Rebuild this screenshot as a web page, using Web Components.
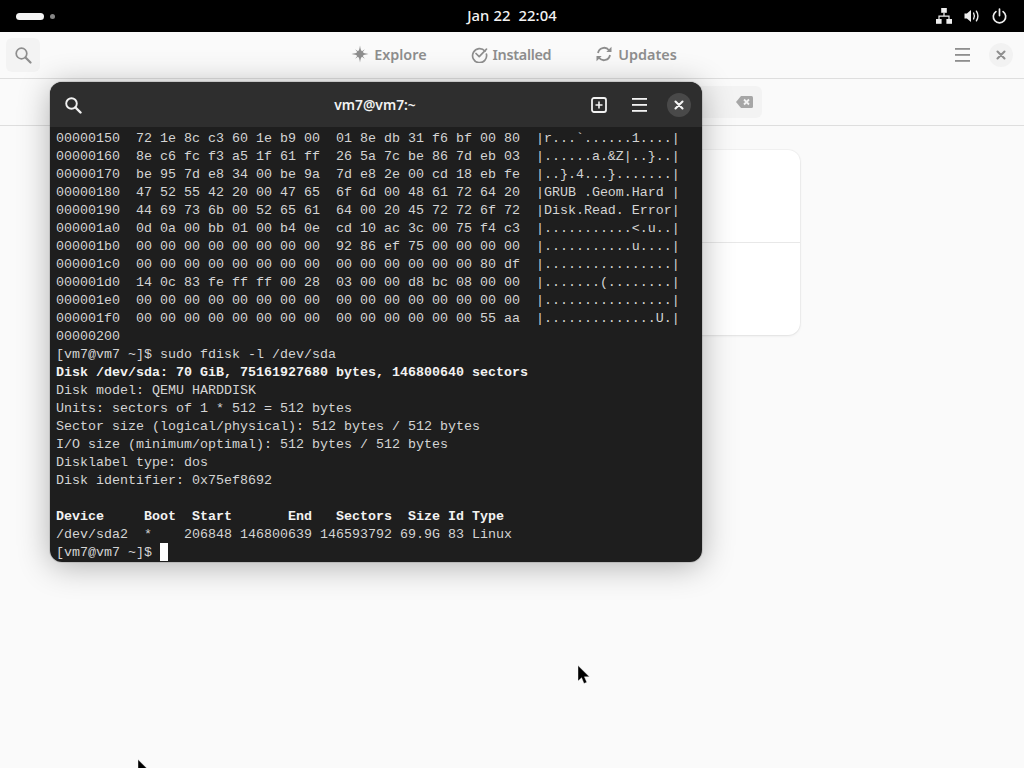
<!DOCTYPE html>
<html lang="en">
<head>
<meta charset="utf-8">
<title>Desktop</title>
<style>
html,body{margin:0;padding:0;width:1024px;height:768px;overflow:hidden;background:#fafafa}
</style>
</head>
<body>
<gnome-desktop>
  <top-bar slot="bar"></top-bar>
  <software-app></software-app>
  <terminal-window title-text="vm7@vm7:~"></terminal-window>
  <mouse-pointer style="left:577px;top:665px"></mouse-pointer>
  <mouse-pointer style="left:137px;top:759px"></mouse-pointer>
</gnome-desktop>
<script>
function def(name, html, setup){
  customElements.define(name, class extends HTMLElement{
    constructor(){super();const r=this.attachShadow({mode:'open'});r.innerHTML=html;if(setup)setup(r,this);}
  });
}
const ICON={
 search:(c,w=1.7)=>`<svg width="18" height="18" viewBox="0 0 18 18" fill="none" stroke="${c}" stroke-width="${w}" stroke-linecap="round"><circle cx="7.5" cy="7.5" r="5.3"/><path d="M11.5 11.5l5 5" stroke-width="${w+.5}"/></svg>`,
 menu:(c)=>`<svg width="15" height="14" viewBox="0 0 15 14" fill="${c}"><rect x="0" y="0" width="15" height="1.8"/><rect x="0" y="6" width="15" height="1.8"/><rect x="0" y="12" width="15" height="1.8"/></svg>`,
 close:(c)=>`<svg width="10" height="10" viewBox="0 0 10 10" fill="none" stroke="${c}" stroke-width="2.1" stroke-linecap="round"><path d="M1.5 1.5l7 7M8.5 1.5l-7 7"/></svg>`
};
def('gnome-desktop',`<style>
:host{display:block;position:relative;width:1024px;height:768px;overflow:hidden;background:#fafafa}
.col{display:flex;flex-direction:column;height:100%}
</style><div class="col"><slot name="bar"></slot><slot></slot></div>`);

def('top-bar',`<style>
:host{display:grid;grid-template-columns:1fr auto 1fr;align-items:center;height:32px;background:#000;color:#f2f2f2;font:500 14.8px "Noto Sans",sans-serif;flex:none}
.act{display:flex;align-items:center;gap:6px;padding-left:16px}
.pill{width:28px;height:7px;border-radius:4px;background:#f4f4f4}
.dot{width:5px;height:5px;border-radius:50%;background:#858585}
.clock{white-space:pre;letter-spacing:.1px;position:relative;top:-1px}
.tray{display:flex;justify-content:flex-end;align-items:center;gap:12px;padding-right:17px}
svg{display:block}
</style>
<div class="act"><span class="pill"></span><span class="dot"></span></div>
<div class="clock">Jan 22  22:04</div>
<div class="tray">
<svg width="16" height="16" viewBox="0 0 16 16" fill="#eee"><rect x="5.2" y="0" width="5.6" height="4.8"/><rect x="0" y="11" width="5.6" height="4.8"/><rect x="10.4" y="11" width="5.6" height="4.8"/><path d="M7.4 4.8h1.2v2.7h5v3.5h-1.2V8.7H3.6V11H2.4V7.5h5z"/></svg>
<svg width="16" height="16" viewBox="0 0 16 16" fill="none" stroke="#eee"><path d="M0.5 5.5h2.4L7 2v12L2.9 10.5H.5z" fill="#eee" stroke="none"/><path d="M9.6 5c1 1.9 1 4.1 0 6" stroke-width="1.4" stroke-linecap="round"/><path d="M12.4 3.2c1.9 3 1.9 6.6 0 9.6" stroke-width="1.4" stroke-linecap="round"/></svg>
<svg width="15" height="16" viewBox="0 0 15 16" fill="none" stroke="#eee" stroke-width="1.7" stroke-linecap="round"><path d="M7.5 1v6.6"/><path d="M3.9 3.6A6.2 6.2 0 1 0 11.1 3.6"/></svg>
</div>`);

def('nav-tab',`<style>
:host{display:flex;align-items:center;gap:5px;color:#8e8e8e;font:600 14.4px "Noto Sans",sans-serif;position:relative;top:-1px}
::slotted(svg){display:block}
</style><slot name="icon"></slot><slot></slot>`);

def('tool-button',`<style>
:host{display:flex;align-items:center;justify-content:center;width:34px;height:34px;border-radius:var(--r,6px);background:var(--bg,transparent);flex:none}
</style><slot></slot>`);

def('result-card',`<style>
:host{display:block;width:576px;height:185px;background:#fff;border-radius:12px;box-shadow:0 0 0 1px rgba(0,0,0,.03),0 1px 3px rgba(0,0,0,.08);box-sizing:border-box;padding-top:92px}
div{height:1px;background:#e8e8e8}
</style><div></div>`);

def('software-app',`<style>
:host{display:flex;flex-direction:column;flex:1;background:#fafafa;min-height:0}
header{display:grid;grid-template-columns:1fr auto 1fr;align-items:center;height:46px;border-bottom:1px solid #dedede;padding:0 6px;flex:none}
.tabs{display:flex;gap:44px;padding-left:4px}
.tabs nav-tab:nth-child(2){letter-spacing:-.3px;margin-left:0}
.end{display:flex;justify-content:flex-end;gap:5px}
.sbar{height:46px;border-bottom:1px solid #dedede;display:flex;justify-content:center;align-items:center;flex:none}
.entry{width:500px;height:32px;border-radius:6px;background:#f3f3f3;display:flex;align-items:center;justify-content:flex-end;padding-right:9px;box-sizing:border-box}
main{flex:1;display:flex;flex-direction:column;align-items:center;padding-top:24px}
svg{display:block}
.left{display:flex}
.b1{--bg:#f3f3f3}
.circle{width:24px;height:24px;border-radius:50%;background:#f2f2f2;display:flex;align-items:center;justify-content:center}
</style>
<header>
<div class="left"><tool-button class="b1">${ICON.search('#8e8e8e')}</tool-button></div>
<div class="tabs">
<nav-tab><svg slot="icon" width="18" height="18" viewBox="0 0 18 18" fill="#8e8e8e"><path d="M9 0.500C9.500 4 10 5.500 11 6.200L13.800 4.200 11.800 7C12.500 8 14 8.500 17.500 9 14 9.500 12.500 10 11.800 11L13.800 13.800 11 11.800C10 12.500 9.500 14 9 17.500 8.500 14 8 12.500 7 11.800L4.200 13.800 6.200 11C5.500 10 4 9.500 .5 9 4 8.500 5.500 8 6.200 7L4.200 4.200 7 6.200C8 5.500 8.500 4 9 .5z"/></svg>Explore</nav-tab>
<nav-tab><svg slot="icon" width="17" height="17" viewBox="0 0 17 17" fill="none" stroke="#8e8e8e" stroke-width="1.7" stroke-linecap="round" stroke-linejoin="round"><path d="M14 5.200A7 7 0 1 0 15.400 8"/><path d="M5 7.500l3.200 3.200L15.500 3.200"/></svg>Installed</nav-tab>
<nav-tab><svg slot="icon" width="18" height="18" viewBox="0 0 18 18" fill="none" stroke="#8e8e8e" stroke-width="1.8"><path d="M3 8A6.200 6.200 0 0 1 14 5.200"/><path d="M15 10A6.200 6.200 0 0 1 4 12.800"/><path d="M16.500 1.800V7h-5.200z" fill="#8e8e8e" stroke="none"/><path d="M1.500 16.200V11h5.200z" fill="#8e8e8e" stroke="none"/></svg>Updates</nav-tab>
</div>
<div class="end">
<tool-button>${ICON.menu('#8e8e8e')}</tool-button>
<tool-button><span class="circle">${ICON.close('#8e8e8e')}</span></tool-button>
</div>
</header>
<div class="sbar"><div class="entry"><svg width="17" height="12" viewBox="0 0 17 12"><path d="M5 0h10.500A1.500 1.500 0 0 1 17 1.500v9a1.500 1.500 0 0 1-1.500 1.500H5L0 6z" fill="#a6a6a6"/><path d="M8 3.500l5 5M13 3.500l-5 5" stroke="#f3f3f3" stroke-width="1.800"/></svg></div></div>
<main><result-card></result-card></main>`);

const LINES=`00000150  72 1e 8c c3 60 1e b9 00  01 8e db 31 f6 bf 00 80  |r...\`......1....|
00000160  8e c6 fc f3 a5 1f 61 ff  26 5a 7c be 86 7d eb 03  |......a.&Z|..}..|
00000170  be 95 7d e8 34 00 be 9a  7d e8 2e 00 cd 18 eb fe  |..}.4...}.......|
00000180  47 52 55 42 20 00 47 65  6f 6d 00 48 61 72 64 20  |GRUB .Geom.Hard |
00000190  44 69 73 6b 00 52 65 61  64 00 20 45 72 72 6f 72  |Disk.Read. Error|
000001a0  0d 0a 00 bb 01 00 b4 0e  cd 10 ac 3c 00 75 f4 c3  |...........&lt;.u..|
000001b0  00 00 00 00 00 00 00 00  92 86 ef 75 00 00 00 00  |...........u....|
000001c0  00 00 00 00 00 00 00 00  00 00 00 00 00 00 80 df  |................|
000001d0  14 0c 83 fe ff ff 00 28  03 00 00 d8 bc 08 00 00  |.......(........|
000001e0  00 00 00 00 00 00 00 00  00 00 00 00 00 00 00 00  |................|
000001f0  00 00 00 00 00 00 00 00  00 00 00 00 00 00 55 aa  |..............U.|
00000200
[vm7@vm7 ~]$ sudo fdisk -l /dev/sda
<b>Disk /dev/sda: 70 GiB, 75161927680 bytes, 146800640 sectors</b>
Disk model: QEMU HARDDISK
Units: sectors of 1 * 512 = 512 bytes
Sector size (logical/physical): 512 bytes / 512 bytes
I/O size (minimum/optimal): 512 bytes / 512 bytes
Disklabel type: dos
Disk identifier: 0x75ef8692

<b>Device     Boot  Start       End   Sectors  Size Id Type</b>
/dev/sda2  *    206848 146800639 146593792 69.9G 83 Linux
[vm7@vm7 ~]$ <i></i>`;

def('terminal-window',`<style>
:host{display:flex;flex-direction:column;position:absolute;left:50px;top:82px;width:652px;height:480px;border-radius:12px;overflow:hidden;background:#1e1e1e;box-shadow:0 4px 32px rgba(0,0,0,.3),0 0 0 1px rgba(0,0,0,.1);color:#d4d4d4}
header{display:grid;grid-template-columns:1fr auto 1fr;align-items:center;height:45px;background:#2e2e2e;padding:0 6px;flex:none;box-sizing:border-box}
h1{margin:0;font:600 13.800px "Noto Sans",sans-serif;color:#f2f2f2;position:relative;left:-1px}
.end{display:flex;justify-content:flex-end;gap:6px}
.circle{width:24px;height:24px;border-radius:50%;background:#494949;display:flex;align-items:center;justify-content:center}
pre{margin:0;padding:3px 0 0 6px;font:13.333px/18px "Liberation Mono",monospace;flex:1;overflow:hidden}
b{color:#f2f2f2;font-weight:700}
i{display:inline-block;width:8px;height:18px;background:#fff;vertical-align:top;margin-top:-1px}
svg{display:block}
</style>
<header>
<div><tool-button>${ICON.search('#f2f2f2',1.9)}</tool-button></div>
<h1 id="t"></h1>
<div class="end">
<tool-button><svg width="16" height="16" viewBox="0 0 16 16" fill="none" stroke="#f2f2f2"><rect x="1" y="1" width="14" height="14" rx="2" stroke-width="1.800"/><path d="M8 4.500v7M4.500 8h7" stroke-width="1.600"/></svg></tool-button>
<tool-button>${ICON.menu('#f2f2f2')}</tool-button>
<tool-button><span class="circle">${ICON.close('#f6f6f6')}</span></tool-button>
</div>
</header>
<pre>${LINES}</pre>`,(r,el)=>{queueMicrotask(()=>{r.getElementById('t').textContent=el.getAttribute('title-text')||'';});});

def('mouse-pointer',`<style>
:host{display:block;position:absolute;width:14px;height:21px}
svg{display:block}
</style><svg width="14" height="21" viewBox="0 0 14 21"><path d="M1 0.500v15.500l3.600-3.300 2.400 5.800 2.800-1.200-2.400-5.500h5z" fill="#000" stroke="#fff" stroke-opacity=".55" stroke-width=".7"/></svg>`);
</script>
</body>
</html>
